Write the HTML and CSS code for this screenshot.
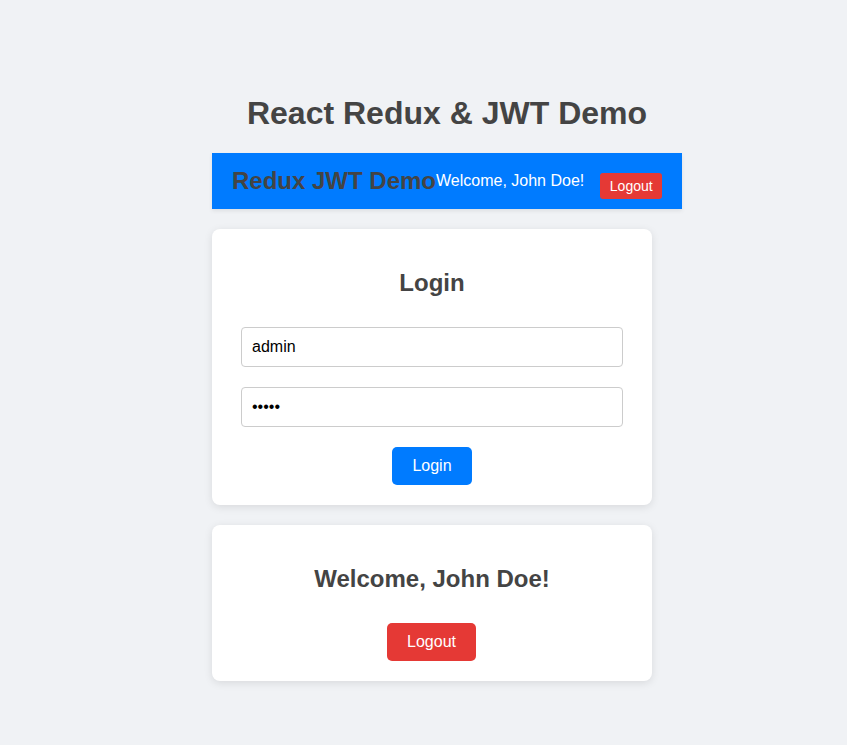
FILE: index.html
```html
<!DOCTYPE html>
<html lang="en">
<head>
<meta charset="utf-8">
<title>React Redux & JWT Demo</title>
<link rel="stylesheet" href="styles.css">
</head>
<body>
<div class="app">
  <h1 class="page-title">React Redux &amp; JWT Demo</h1>
  <nav class="navbar">
    <h2 class="brand">Redux JWT Demo</h2>
    <div class="nav-right">
      <span class="nav-welcome">Welcome, John Doe!</span>
      <button class="btn-nav-logout">Logout</button>
    </div>
  </nav>
  <div class="card">
    <h2 class="card-title">Login</h2>
    <form class="login-form">
      <input class="field" type="text" value="admin">
      <input class="field" type="password" value="admin">
      <button type="button" class="btn btn-primary">Login</button>
    </form>
  </div>
  <div class="card">
    <h2 class="card-title">Welcome, John Doe!</h2>
    <button class="btn btn-danger">Logout</button>
  </div>
</div>
</body>
</html>
```
FILE: styles.css
```css
* { box-sizing: border-box; }
html, body {
  margin: 0;
  padding: 0;
  background: #f0f2f5;
  font-family: "Liberation Sans", Arial, sans-serif;
  color: #444;
}
.app {
  width: 470px;
  margin-left: 212px;
  padding-top: 95px;
}
.page-title {
  margin: 0 0 21px;
  font-size: 32px;
  line-height: 37px;
  text-align: center;
  color: #444;
}
.navbar {
  height: 56px;
  background: #007bff;
  display: flex;
  align-items: center;
  justify-content: space-between;
  padding: 0 20px;
  box-shadow: 0 2px 4px rgba(0,0,0,0.08);
  margin-bottom: 20px;
}
.brand {
  margin: 0;
  font-size: 24px;
  line-height: 28px;
  color: #444;
  white-space: nowrap;
}
.nav-right {
  display: flex;
  align-items: center;
  white-space: nowrap;
}
.nav-welcome {
  color: #fff;
  font-size: 16px;
  line-height: 18px;
}
.btn-nav-logout {
  margin-left: 16px;
  margin-top: 9px;
  background: #e53935;
  color: #fff;
  border: none;
  border-radius: 3px;
  font-family: "Liberation Sans", Arial, sans-serif;
  font-size: 14px;
  height: 26px;
  width: 62px;
  padding: 0;
}
.card {
  width: 440px;
  background: #fff;
  border-radius: 8px;
  box-shadow: 0 2px 8px rgba(0,0,0,0.1);
  padding: 20px 29px;
  margin-bottom: 20px;
  text-align: center;
}
.card-title {
  margin: 20px 0 30px;
  font-size: 24px;
  line-height: 28px;
  color: #444;
}
.login-form {
  display: flex;
  flex-direction: column;
  align-items: center;
}
.field {
  width: 100%;
  height: 40px;
  border: 1px solid #ccc;
  border-radius: 4px;
  padding: 0 10px;
  font-family: "Liberation Sans", Arial, sans-serif;
  font-size: 16px;
  color: #000;
  margin-bottom: 20px;
  background: #fff;
}
.btn {
  height: 38px;
  border: none;
  border-radius: 5px;
  color: #fff;
  font-family: "Liberation Sans", Arial, sans-serif;
  font-size: 16px;
  padding: 0;
}
.btn-primary { background: #007bff; width: 80px; }
.btn-danger { background: #e53935; width: 89px; margin-right: 1px; }
```
